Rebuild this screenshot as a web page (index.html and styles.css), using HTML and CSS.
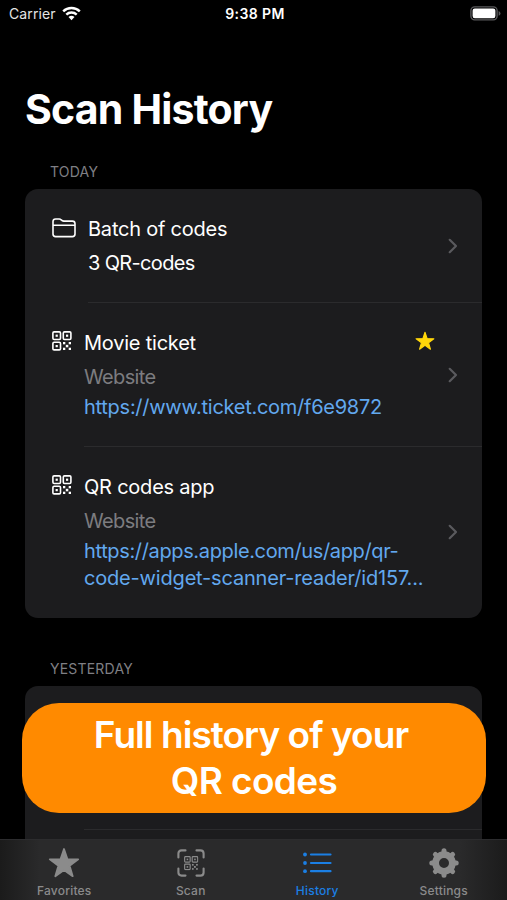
FILE: index.html
```html
<!DOCTYPE html>
<html lang="en">
<head>
  <meta charset="UTF-8">
  <meta name="viewport" content="width=device-width, initial-scale=1.0">
  <title>Scan History</title>
  <link rel="stylesheet" href="styles.css">
</head>
<body>
  <!-- Shared icons -->
  <svg class="sprite" xmlns="http://www.w3.org/2000/svg">
    <symbol id="qr" viewBox="0 0 20 20">
      <g fill="none" stroke="currentColor" stroke-width="1.6">
        <rect x="0.9" y="0.9" width="7.6" height="7.6" rx="1.2"/>
        <rect x="11.3" y="0.9" width="7.6" height="7.6" rx="1.2"/>
        <rect x="0.9" y="11.3" width="7.6" height="7.6" rx="1.2"/>
      </g>
      <g fill="currentColor">
        <rect x="3.6" y="3.6" width="2.2" height="2.2"/>
        <rect x="14" y="3.6" width="2.2" height="2.2"/>
        <rect x="3.6" y="14" width="2.2" height="2.2"/>
        <rect x="11" y="11" width="2.3" height="2.3"/>
        <rect x="16.7" y="11" width="2.3" height="2.3"/>
        <rect x="13.8" y="13.8" width="2.5" height="2.5"/>
        <rect x="11" y="16.7" width="2.3" height="2.3"/>
        <rect x="16.7" y="16.7" width="2.3" height="2.3"/>
      </g>
    </symbol>
    <symbol id="chevron" viewBox="0 0 10 16">
      <path d="M1.7 1.8L8 8L1.7 14.2" fill="none" stroke="currentColor" stroke-width="2.2" stroke-linecap="round" stroke-linejoin="round"/>
    </symbol>
    <symbol id="star" viewBox="0 0 32 32">
      <path d="M16 2L19.4 12.1L30.2 12.3L21.6 18.7L24.7 29.2L16 22.9L7.3 29.2L10.4 18.7L1.8 12.3L12.6 12.1Z" fill="currentColor" stroke="currentColor" stroke-width="1.8" stroke-linejoin="round"/>
    </symbol>
  </svg>

  <!-- Status Bar -->
  <header class="status-bar">
    <div class="carrier">
      <span>Carrier</span>
      <svg class="wifi" viewBox="0 0 19 15">
        <g fill="none" stroke="#fff" stroke-width="2.4">
          <path d="M1.2 5.4A11.8 11.8 0 0 1 17.8 5.4"/>
          <path d="M4.3 8.6A7.4 7.4 0 0 1 14.7 8.6"/>
        </g>
        <path d="M9.5 14.2L6.5 11.1A4.3 4.3 0 0 1 12.5 11.1Z" fill="#fff"/>
      </svg>
    </div>
    <div class="time">9:38 PM</div>
    <svg class="battery" viewBox="0 0 31 15">
      <rect x="0.9" y="0.9" width="26.2" height="13" rx="3.8" fill="none" stroke="#59595b" stroke-width="1.4"/>
      <rect x="2.6" y="2.6" width="22.8" height="9.6" rx="2.2" fill="#fff"/>
      <path d="M28.6 5V9.8Q30.5 9 30.5 7.4T28.6 5Z" fill="#59595b"/>
    </svg>
  </header>

  <!-- History List -->
  <main class="content">
    <h1>Scan History</h1>

    <h2>TODAY</h2>
    <section class="card">
      <div class="row folder-row">
        <svg class="folder" viewBox="0 0 24 20">
          <path d="M1 16V3.6Q1 1 3.6 1H7.2Q8.3 1 9.2 1.8L10 2.5Q10.8 3.1 11.8 3.1H20.4Q23 3.1 23 5.7V16Q23 18.6 20.4 18.6H3.6Q1 18.6 1 16ZM1 7.2H23" fill="none" stroke="currentColor" stroke-width="1.6"/>
        </svg>
        <div class="info">
          <p class="name">Batch of codes</p>
          <p class="count">3 QR-codes</p>
        </div>
        <svg class="chevron"><use href="#chevron"/></svg>
      </div>
      <div class="row">
        <svg class="qr"><use href="#qr"/></svg>
        <div class="info">
          <p class="name">Movie ticket</p>
          <p class="type">Website</p>
          <p class="link">https://www.ticket.com/f6e9872</p>
        </div>
        <svg class="favorite"><use href="#star"/></svg>
        <svg class="chevron"><use href="#chevron"/></svg>
      </div>
      <div class="row">
        <svg class="qr"><use href="#qr"/></svg>
        <div class="info">
          <p class="name">QR codes app</p>
          <p class="type">Website</p>
          <p class="link"><span class="link-start">https://apps.apple.com/us/app/qr-</span><br><span class="link-end">code-widget-scanner-reader/id157...</span></p>
        </div>
        <svg class="chevron"><use href="#chevron"/></svg>
      </div>
    </section>

    <h2 class="yesterday">YESTERDAY</h2>
    <section class="card card-cut">
      <div class="row"><div class="info"></div></div>
      <div class="row"><div class="info"></div></div>
    </section>
  </main>

  <!-- Promo Banner -->
  <div class="banner">
    <span class="banner-top">Full history of your</span>
    <span class="banner-bottom">QR codes</span>
  </div>

  <!-- Tab Bar -->
  <nav class="tab-bar">
    <div class="tab">
      <svg class="tab-icon"><use href="#star"/></svg>
      <span>Favorites</span>
    </div>
    <div class="tab">
      <svg class="tab-icon" viewBox="0 0 32 32">
        <path d="M3.4 10.5V6.6Q3.4 3.4 6.6 3.4H10.5M21.5 3.4H25.4Q28.6 3.4 28.6 6.6V10.5M28.6 21.5V25.4Q28.6 28.6 25.4 28.6H21.5M10.5 28.6H6.6Q3.4 28.6 3.4 25.4V21.5" fill="none" stroke="currentColor" stroke-width="2.1" stroke-linecap="round"/>
        <use href="#qr" x="9" y="9" width="14.5" height="14.5"/>
      </svg>
      <span>Scan</span>
    </div>
    <div class="tab active">
      <svg class="tab-icon" viewBox="0 0 32 32">
        <path d="M10 7.5H29.5M10 16H29.5M10 24.2H29.5" stroke="currentColor" stroke-width="2.2" stroke-linecap="round"/>
        <g fill="currentColor">
          <circle cx="4" cy="7.5" r="1.9"/>
          <circle cx="4" cy="16" r="1.9"/>
          <circle cx="4" cy="24.2" r="1.9"/>
        </g>
      </svg>
      <span>History</span>
    </div>
    <div class="tab">
      <svg class="tab-icon" viewBox="0 0 32 32">
        <circle cx="16" cy="16" r="8.4" fill="none" stroke="currentColor" stroke-width="6.8"/>
        <g stroke="currentColor" stroke-width="5" stroke-linecap="round">
          <path d="M16 5V3.8M16 27V28.2M5 16H3.8M27 16H28.2M8.2 8.2L7.4 7.4M23.8 8.2L24.6 7.4M8.2 23.8L7.4 24.6M23.8 23.8L24.6 24.6"/>
        </g>
      </svg>
      <span>Settings</span>
    </div>
  </nav>
</body>
</html>
```
FILE: styles.css
```css
/* General Styles */
* {
  margin: 0;
  padding: 0;
  box-sizing: border-box;
}

body {
  position: relative;
  display: flex;
  flex-direction: column;
  height: 900px;
  overflow: hidden;
  background: #000;
  color: #fff;
  font-family: Inter, "Liberation Sans", sans-serif;
}

svg {
  display: block;
  flex: none;
}

.sprite {
  position: absolute;
  width: 0;
  height: 0;
}

/* Status Bar */
.status-bar {
  display: grid;
  grid-template-columns: 1fr auto 1fr;
  align-items: center;
  height: 27px;
  padding: 0 6px 0 9px;
  font-size: 14px;
  flex: none;
}

.carrier {
  display: flex;
  align-items: center;
  gap: 6px;
  color: #e4e4e4;
  letter-spacing: 0.1px;
}

.wifi {
  width: 19px;
  height: 15px;
}

.time {
  font-weight: 600;
  font-size: 14px;
  letter-spacing: 0.4px;
}

.battery {
  width: 31px;
  height: 15px;
  justify-self: end;
}

/* History List */
.content {
  flex: 1;
  min-height: 0;
  padding: 0 25px;
  overflow: hidden;
}

h1 {
  margin-top: 57px;
  font-size: 41px;
  line-height: 50px;
  font-weight: 700;
  letter-spacing: -0.8px;
}

h2 {
  margin: 28px 0 6.5px 25px;
  font-size: 14px;
  line-height: 20px;
  font-weight: 400;
  letter-spacing: 0.2px;
  color: #7f7f84;
}

.card {
  background: #1c1c1e;
  border-radius: 13px;
  overflow: hidden;
}

.row {
  display: flex;
  align-items: center;
  padding-left: 27px;
}

.info {
  flex: 1;
  align-self: stretch;
  padding: 27px 0 26px;
  font-size: 20px;
  line-height: 27px;
  white-space: nowrap;
}

.row + .row .info {
  position: relative;
}

/* Separator runs from the text to the card edge */
.row + .row .info::before {
  content: "";
  position: absolute;
  top: -1px;
  left: 0;
  width: 399px;
  height: 1px;
  background: #2b2b2d;
}

.folder-row + .row .info::before {
  left: 4px;
}

.name {
  margin-bottom: 7px;
  letter-spacing: -0.22px;
}

.count {
  letter-spacing: -0.65px;
}

.type {
  margin-bottom: 3px;
  letter-spacing: -0.65px;
  color: #7c7c80;
}

.link {
  letter-spacing: -0.27px;
  color: #62a8ee;
}

.link-start {
  letter-spacing: -0.36px;
}

.link-end {
  letter-spacing: -0.18px;
}

.folder {
  width: 24px;
  height: 20px;
  margin: 29px 12px 0 0;
  align-self: flex-start;
}

.qr {
  width: 20px;
  height: 20px;
  margin: 28.5px 12px 0 0;
  align-self: flex-start;
}

.favorite {
  width: 20px;
  height: 20px;
  margin: 28.5px 13.5px 0 0;
  align-self: flex-start;
  color: #ffd60a;
}

.chevron {
  width: 10px;
  height: 16px;
  margin-right: 24px;
  color: #5a5a5e;
}

h2.yesterday {
  margin-top: 41.5px;
}

.card-cut {
  height: 200px;
}

.card-cut .info {
  height: 144px;
  margin-left: 32px;
}

/* Promo Banner */
.banner {
  position: absolute;
  top: 703px;
  left: 22px;
  width: 464px;
  height: 110px;
  padding-top: 9px;
  border-radius: 37px;
  background: #ff8a00;
  font-size: 37px;
  line-height: 46px;
  font-weight: 600;
  text-align: center;
}

.banner span {
  display: block;
}

.banner-top {
  padding-right: 6px;
  letter-spacing: -0.95px;
}

.banner-bottom {
  letter-spacing: -0.6px;
}

/* Tab Bar */
.tab-bar {
  display: flex;
  flex: none;
  height: 61px;
  padding-left: 1px;
  background: linear-gradient(90deg, #1b1b1b 0, #2a2a2b 40px, #2a2a2b 460px, #1b1b1b 507px);
  border-top: 1px solid #2c2c2e;
}

.tab {
  flex: 1;
  display: flex;
  flex-direction: column;
  align-items: center;
  padding-top: 7px;
  color: #8b8b8b;
  font-size: 12px;
  line-height: 16px;
  font-weight: 500;
  letter-spacing: 0.2px;
}

.tab-icon {
  width: 32px;
  height: 32px;
  margin-bottom: 4px;
}

.active {
  color: #1b7fe4;
}
```
